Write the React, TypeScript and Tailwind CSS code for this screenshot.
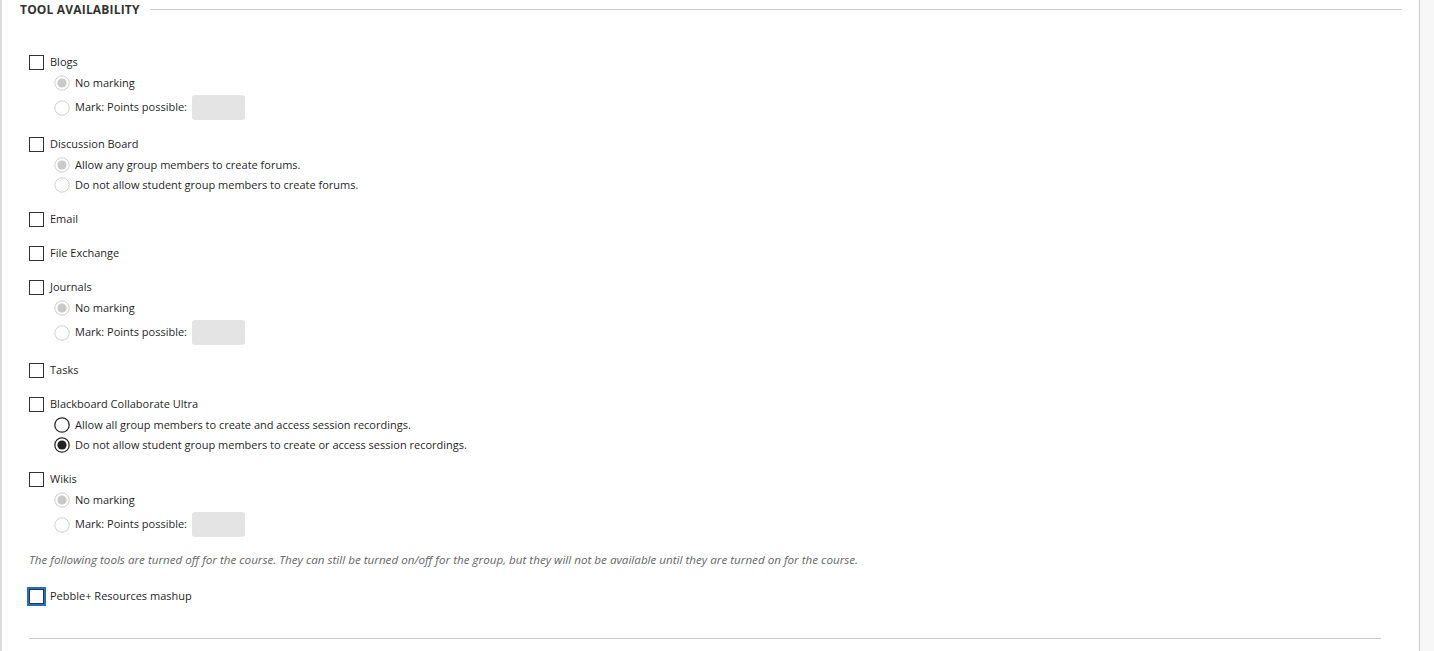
import React from "react";

type Sub = { label: string; selected?: boolean; enabled?: boolean; input?: boolean };
type Tool = { name: string; mt: string; subs?: Sub[] };

const marking = (): Sub[] => [
  { label: "No marking", selected: true },
  { label: "Mark: Points possible:", input: true },
];

const tools: Tool[] = [
  { name: "Blogs", mt: "mt-[34px]", subs: marking() },
  {
    name: "Discussion Board",
    mt: "mt-[16px]",
    subs: [
      { label: "Allow any group members to create forums.", selected: true },
      { label: "Do not allow student group members to create forums." },
    ],
  },
  { name: "Email", mt: "mt-[18px]" },
  { name: "File Exchange", mt: "mt-[18px]" },
  { name: "Journals", mt: "mt-[18px]", subs: marking() },
  { name: "Tasks", mt: "mt-[17px]" },
  {
    name: "Blackboard Collaborate Ultra",
    mt: "mt-[18px]",
    subs: [
      { label: "Allow all group members to create and access session recordings.", enabled: true },
      {
        label: "Do not allow student group members to create or access session recordings.",
        enabled: true,
        selected: true,
      },
    ],
  },
  { name: "Wikis", mt: "mt-[18px]", subs: marking() },
];

const Checkbox = ({ focus }: { focus?: boolean }) => (
  <span
    className={`block w-[15px] h-[15px] border border-[#333] bg-white ${
      focus ? "ring-2 ring-[#1c6fcb]" : ""
    }`}
  />
);

const Radio = ({ selected, enabled }: { selected?: boolean; enabled?: boolean }) => {
  const stroke = enabled ? "#2b2b2b" : "#cfcfcf";
  const dot = enabled ? "#222" : "#c9c9c9";
  return (
    <svg width="16" height="16" viewBox="0 0 16 16" className="shrink-0">
      <circle cx="8" cy="8" r="7.2" fill="#fff" stroke={stroke} strokeWidth={enabled ? 1.3 : 1} />
      {selected && <circle cx="8" cy="8" r="4.6" fill={dot} />}
    </svg>
  );
};

const ToolRow = ({ tool }: { tool: Tool }) => (
  <div className={`flex flex-col ${tool.mt}`}>
    <label className="flex items-center h-4 gap-[6px]">
      <Checkbox />
      <span>{tool.name}</span>
    </label>
    {tool.subs?.map((s, i) => (
      <div
        key={s.label}
        className={`flex items-center pl-[25px] gap-[5px] ${s.input ? "h-[25px]" : "h-4"} ${
          i === 0 ? "mt-[5px]" : "mt-1"
        }`}
      >
        <Radio selected={s.selected} enabled={s.enabled} />
        <span>{s.label}</span>
        {s.input && <span className="w-[53px] h-[25px] rounded-[3px] bg-[#e4e4e4]" />}
      </div>
    ))}
  </div>
);

export default function App() {
  return (
    <div
      className="flex w-full h-[651px] bg-[#f7f7f7] text-[11px] text-[#1f1f1f] overflow-hidden"
      style={{ fontFamily: '"Open Sans", "Liberation Sans", sans-serif' }}
    >
      <div className="w-[1420px] h-full bg-white border-l-2 border-r border-l-[#dcdcdc] border-r-[#cccccc]">
        {/* Section heading */}
        <div className="flex items-center h-5 pl-[18px] pr-[17px]">
          <h2 className="font-bold text-[12px] text-[#333] tracking-[0.18px]">TOOL AVAILABILITY</h2>
          <div className="flex-1 ml-[10px] h-px bg-[#cccccc] -mt-[2px]" />
        </div>

        <div className="flex flex-col pl-[27px] pr-[38px]">
          {tools.map((t) => (
            <ToolRow key={t.name} tool={t} />
          ))}

          <p className="mt-[15px] h-4 leading-4 italic text-[11.65px] text-[#666]">
            The following tools are turned off for the course. They can still be turned on/off for the group, but
            they will not be available until they are turned on for the course.
          </p>

          <label className="flex items-center h-4 gap-[6px] mt-[20px]">
            <Checkbox focus />
            <span>Pebble+ Resources mashup</span>
          </label>

          <div className="mt-[34px] h-px bg-[#cccccc]" />
        </div>
      </div>
    </div>
  );
}
